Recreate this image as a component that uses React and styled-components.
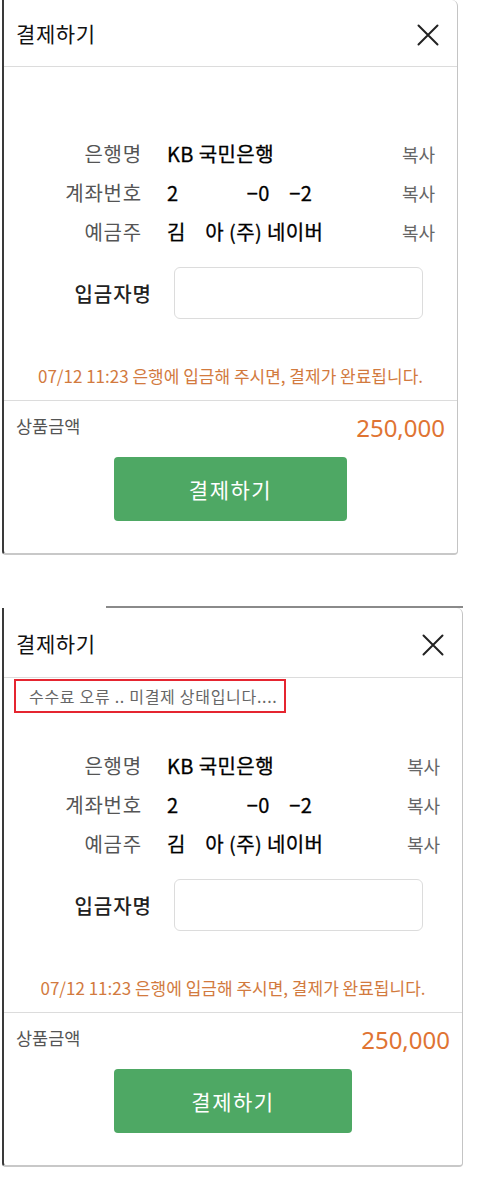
import styled, { createGlobalStyle } from 'styled-components';

const GlobalStyle = createGlobalStyle`
  html, body {
    margin: 0;
    padding: 0;
    background: #fff;
  }
  body {
    font-family: "Noto Sans CJK KR", "Noto Sans", sans-serif;
  }
`;

const sp = (n) => '\u00a0'.repeat(n);

const account = [
  { label: '은행명', value: 'KB 국민은행' },
  { label: '계좌번호', value: `2${sp(14)}\u22120${sp(4)}\u22122` },
  { label: '예금주', value: `김${sp(4)}아 (주) 네이버` },
];

const CloseIcon = () => (
  <svg width="22" height="22" viewBox="0 0 22 22" fill="none">
    <path d="M1.5 1.5 L20.5 20.5 M20.5 1.5 L1.5 20.5" stroke="#222" strokeWidth="2" strokeLinecap="round" />
  </svg>
);

const PayModal = ({ width, headerHeight, buttonWidth, error }) => (
  <Panel $width={width}>
    <Header $height={headerHeight}>
      <Title>결제하기</Title>
      <CloseButton type="button" aria-label="닫기">
        <CloseIcon />
      </CloseButton>
    </Header>

    {error && <ErrorBanner>{error}</ErrorBanner>}

    <Body $top={error ? 33 : 67}>
      <InfoGrid>
        {account.map((row) => (
          <InfoRow key={row.label}>
            <InfoLabel>{row.label}</InfoLabel>
            <InfoValue>{row.value}</InfoValue>
            <CopyButton type="button">복사</CopyButton>
          </InfoRow>
        ))}
      </InfoGrid>

      <DepositorRow>
        <DepositorLabel>입금자명</DepositorLabel>
        <DepositorInput type="text" />
      </DepositorRow>

      <Notice>07/12 11:23 은행에 입금해 주시면, 결제가 완료됩니다.</Notice>
    </Body>

    <Footer>
      <PriceRow>
        <PriceLabel>상품금액</PriceLabel>
        <PriceValue>250,000</PriceValue>
      </PriceRow>
      <PayButton type="button" $width={buttonWidth}>결제하기</PayButton>
    </Footer>
  </Panel>
);

const App = () => (
  <>
    <GlobalStyle />
    <Page>
      <PayModal width={456} headerHeight={67} buttonWidth={233} />
      <CropEdge />
      <PayModal
        width={461}
        headerHeight={70}
        buttonWidth={238}
        error="수수료 오류 .. 미결제 상태입니다...."
      />
    </Page>
  </>
);

const Page = styled.div`
  display: flex;
  flex-direction: column;
  align-items: flex-start;
  padding-left: 2px;
`;

const Panel = styled.section`
  width: ${(p) => p.$width}px;
  box-sizing: border-box;
  background: #fff;
  border-left: 2px solid #3a3a3a;
  border-right: 1px solid #c4c4c4;
  border-bottom: 2px solid #c8c8c8;
  border-radius: 0 6px 4px 4px;
  display: flex;
  flex-direction: column;

  & + & {
    border-left: 1px solid #cfcfcf;
    border-right: 1px solid #eee;
    border-bottom: 1px solid #e4e4e4;
  }
`;

const CropEdge = styled.div`
  margin-top: 51px;
  margin-left: 104px;
  width: 357px;
  height: 2px;
  background: #8a8a8a;
`;

const Header = styled.header`
  height: ${(p) => p.$height}px;
  box-sizing: border-box;
  display: flex;
  align-items: center;
  justify-content: space-between;
  padding: 0 18px 0 12px;
  border-bottom: 1px solid #dcdcdc;
`;

const Title = styled.h2`
  margin: 0;
  font-size: 21px;
  font-weight: 400;
  color: #111;
  letter-spacing: 0.6px;
`;

const CloseButton = styled.button`
  border: none;
  background: none;
  padding: 0;
  margin-top: 4px;
  display: flex;
  cursor: pointer;
`;

const ErrorBanner = styled.div`
  margin: 1px 0 0 10px;
  width: 272px;
  height: 34px;
  box-sizing: border-box;
  border: 2px solid #e52530;
  padding-left: 13px;
  display: flex;
  align-items: center;
  font-size: 16px;
  color: #666;
  letter-spacing: 0.7px;
  white-space: nowrap;
`;

const Body = styled.div`
  padding-top: ${(p) => p.$top}px;
  display: flex;
  flex-direction: column;
`;

const InfoGrid = styled.div`
  display: flex;
  flex-direction: column;
`;

const InfoRow = styled.div`
  display: grid;
  grid-template-columns: 138px 1fr auto;
  column-gap: 25px;
  align-items: center;
  height: 39px;
  padding-right: 22px;
`;

const InfoLabel = styled.span`
  text-align: right;
  font-size: 20px;
  color: #555;
  letter-spacing: 0.8px;
`;

const InfoValue = styled.span`
  font-size: 20px;
  font-weight: 400;
  color: #000;
  letter-spacing: 0.4px;
  white-space: nowrap;
  -webkit-text-stroke: 0.3px #000;
`;

const CopyButton = styled.button`
  border: none;
  background: none;
  padding: 0;
  font-family: inherit;
  font-size: 18px;
  color: #666;
  cursor: pointer;
`;

const DepositorRow = styled.div`
  display: grid;
  grid-template-columns: 148px 249px;
  column-gap: 22px;
  align-items: center;
  margin-top: 16px;
`;

const DepositorLabel = styled.span`
  text-align: right;
  font-size: 20px;
  font-weight: 500;
  color: #222;
  letter-spacing: 1px;
`;

const DepositorInput = styled.input`
  height: 52px;
  box-sizing: border-box;
  border: 1px solid #dcdcdc;
  border-radius: 6px;
  outline: none;
  font-size: 17px;
`;

const Notice = styled.p`
  margin: 46px 0 0;
  padding-bottom: 13px;
  text-align: center;
  font-size: 17px;
  line-height: 22px;
  color: #d27a3e;
  letter-spacing: 0;
  white-space: nowrap;
  border-bottom: 1px solid #dcdcdc;
`;

const Footer = styled.div`
  display: flex;
  flex-direction: column;
  align-items: center;
  padding: 11px 0 32px;
`;

const PriceRow = styled.div`
  align-self: stretch;
  display: flex;
  justify-content: space-between;
  align-items: center;
  padding: 0 12px 0 12px;
  height: 30px;
`;

const PriceLabel = styled.span`
  font-size: 17.5px;
  color: #555;
  margin-top: -3px;
`;

const PriceValue = styled.span`
  font-size: 24px;
  color: #df7433;
  font-family: "Noto Sans", "Noto Sans CJK KR", sans-serif;
`;

const PayButton = styled.button`
  margin-top: 15px;
  width: ${(p) => p.$width}px;
  height: 64px;
  border: none;
  border-radius: 4px;
  background: #4ea864;
  color: #fff;
  font-family: inherit;
  font-size: 21px;
  font-weight: 400;
  letter-spacing: 1.5px;
  cursor: pointer;
`;

export default App;
